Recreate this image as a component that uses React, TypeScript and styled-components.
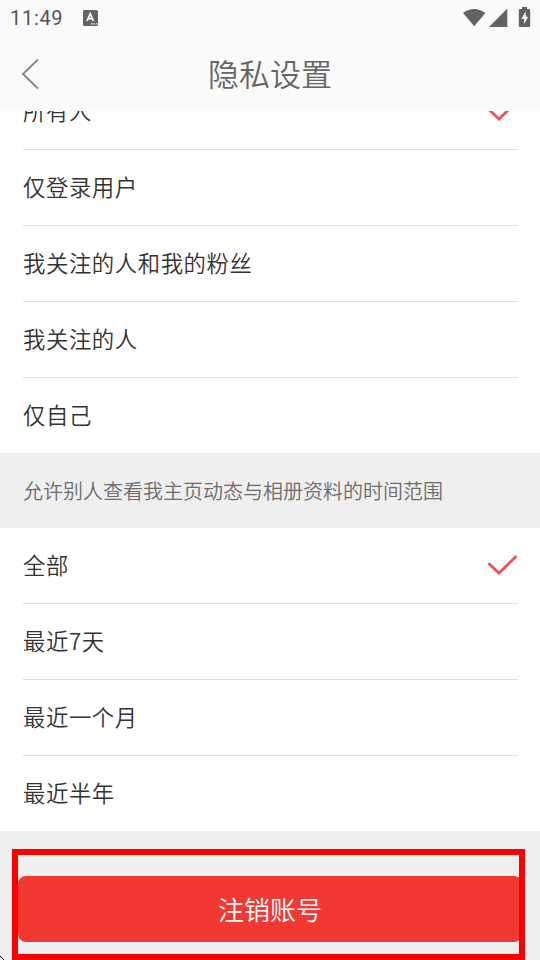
import React from "react";
import styled, { createGlobalStyle } from "styled-components";

const GlobalStyle = createGlobalStyle`
  * { box-sizing: border-box; }
  body { margin: 0; background: #efefef; font-family: "Noto Sans CJK SC", sans-serif; }
`;

const Screen = styled.main`
  position: relative;
  display: flex;
  flex-direction: column;
  width: 540px;
  height: 960px;
  overflow: hidden;
  background: #efefef;
`;

const Header = styled.header`
  flex: none;
  height: 111px;
  background: #fafafa;
  color: #666;
`;

const StatusBar = styled.div`
  display: flex;
  align-items: center;
  height: 36px;
  padding: 0 9px 0 10px;
`;

const Clock = styled.span`
  width: 73px;
  font: 400 20px/38px Roboto, sans-serif;
  letter-spacing: 0.7px;
  color: #555;
`;

const StatusIcons = styled.div`
  display: flex;
  align-items: center;
  margin-left: auto;
`;

const TitleBar = styled.div`
  display: grid;
  grid-template-columns: 60px 1fr 60px;
  align-items: center;
  height: 73px;
`;

const BackButton = styled.button`
  display: flex;
  padding: 0 0 0 20px;
  border: 0;
  background: none;
`;

const Title = styled.h1`
  margin: 0;
  font-size: 31px;
  font-weight: 350;
  line-height: 73px;
  height: 75px;
  text-align: center;
`;

const Content = styled.div`
  flex: none;
  height: 849px;
  overflow: hidden;
`;

const OptionList = styled.ul<{ $scrolled?: boolean }>`
  margin: ${(p) => (p.$scrolled ? "-37px" : "0")} 0 0;
  padding: 0 22px 0 23px;
  list-style: none;
  background: #fff;
`;

const Option = styled.li`
  display: flex;
  align-items: center;
  justify-content: space-between;
  height: 76px;
  border-bottom: 1px solid #dedede;
  font-size: 22.4px;
  letter-spacing: 0.55px;
  font-weight: 350;
  color: #333;
  &:last-child { height: 75px; border-bottom: 0; }
`;

const OptionLabel = styled.span`
  padding-bottom: 3px;
`;

const SectionNote = styled.p`
  margin: 0;
  height: 75px;
  padding-left: 23px;
  font-size: 20px;
  font-weight: 350;
  line-height: 75px;
  color: #6c6c6c;
`;

const Footer = styled.footer`
  padding: 45px 18px 0;
`;

const DeleteButton = styled.button`
  width: 504px;
  height: 66px;
  padding: 0;
  border: 0;
  border-radius: 8px;
  background: #f13832;
  color: #fff;
  font: 350 26px/66px "Noto Sans CJK SC", sans-serif;
`;

const Highlight = styled.div`
  position: absolute;
  left: 12px;
  top: 849px;
  width: 513px;
  height: 111px;
  border: 6px solid #fe0000;
`;

const CornerMark = styled.svg`
  position: absolute;
  left: 0;
  bottom: 0;
`;

const Check = () => (
  <svg width="31" height="23" viewBox="0 0 31 23" fill="none">
    <path d="M1.5 9.2 12 19.1 29.5 2" stroke="#f2504e" strokeWidth="2.8" />
  </svg>
);

const AUDIENCES = ["所有人", "仅登录用户", "我关注的人和我的粉丝", "我关注的人", "仅自己"];
const RANGES = ["全部", "最近7天", "最近一个月", "最近半年"];

const Options = ({ items, scrolled }: { items: string[]; scrolled?: boolean }) => (
  <OptionList $scrolled={scrolled}>
    {items.map((label, i) => (
      <Option key={label}>
        <OptionLabel>{label}</OptionLabel>
        {i === 0 && <Check />}
      </Option>
    ))}
  </OptionList>
);

export default function App() {
  return (
    <Screen>
      <GlobalStyle />
      <Header>
        <StatusBar>
          <Clock>11:49</Clock>
          <svg width="15" height="16" viewBox="0 0 15 16">
            <rect width="15" height="16" rx="1.5" fill="#636363" />
            <path d="M4 11 7.2 3.7 10.4 11M5.2 8.7h4" fill="none" stroke="#fff" strokeWidth="1.7" />
            <path d="M8 13.8h1.4m1 0h1.4m1 0h1.4" stroke="#fff" strokeWidth="1.2" />
          </svg>
          <StatusIcons>
            <svg width="68" height="22" viewBox="0 0 68 22" fill="#636363">
              <path d="M0 6Q11 -2 22.4 6L11.2 19.2Z" />
              <path d="M26 20 44.3 1.6V20Z" />
              <path d="M59 0h5v2h2q1.2 0 1.2 1.2v15.6q0 1.2-1.2 1.2h-9q-1.2 0-1.2-1.2V3.2Q55.8 2 57 2h2Z" />
              <path d="M62.7 4.5 58.5 11.8h2.6V17l4-7.3h-2.4Z" fill="#fff" />
            </svg>
          </StatusIcons>
        </StatusBar>
        <TitleBar>
          <BackButton aria-label="返回">
            <svg width="20" height="32" viewBox="0 0 20 32" fill="none" stroke="#858585" strokeWidth="1.8">
              <path d="M18 1.5 3 16 18 30.5" />
            </svg>
          </BackButton>
          <Title>隐私设置</Title>
        </TitleBar>
      </Header>
      <Content>
        <Options items={AUDIENCES} scrolled />
        <SectionNote>允许别人查看我主页动态与相册资料的时间范围</SectionNote>
        <Options items={RANGES} />
        <Footer>
          <DeleteButton>注销账号</DeleteButton>
        </Footer>
      </Content>
      <Highlight />
      <CornerMark width="5" height="5" viewBox="0 0 5 5" shapeRendering="crispEdges">
        <path d="M0 1h1v1h1v1h1v1h1v1H3V4H2V3H1V2H0Z" fill="#000" />
      </CornerMark>
    </Screen>
  );
}
